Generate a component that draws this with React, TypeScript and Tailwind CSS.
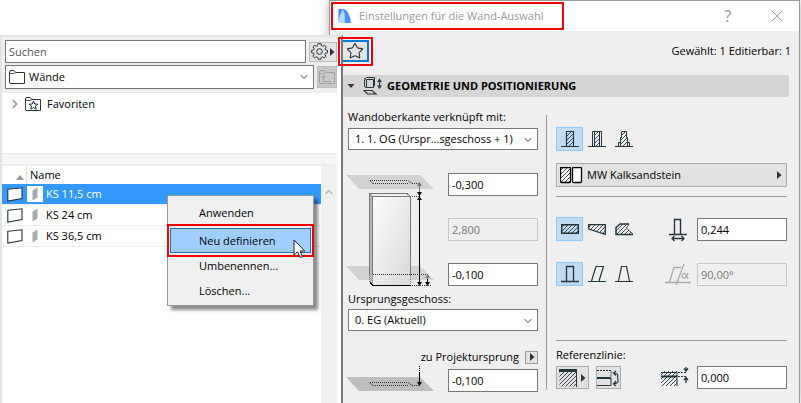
import React from 'react';
import clsx from 'clsx';
import { ChevronDown, ChevronRight, ChevronUp, Star, X } from 'lucide-react';

const INK = '#26343c';

const rows = ['KS 11,5 cm', 'KS 24 cm', 'KS 36,5 cm'];

const menuItems = ['Anwenden', 'Neu definieren', 'Umbenennen...', 'Löschen...'];

const Triangle: React.FC<{ dir: 'right' | 'down' | 'up' }> = ({ dir }) => (
  <svg width="8" height="8" viewBox="0 0 8 8" className="shrink-0" aria-hidden="true">
    {dir === 'right' && <path d="M2 0 L6.5 4 L2 8Z" fill="#333" />}
    {dir === 'down' && <path d="M0.5 2 H7.5 L4 6Z" fill="#333" />}
    {dir === 'up' && <path d="M0 6 H8 L4 1Z" fill="#999" />}
  </svg>
);

const FolderIcon: React.FC<{ kind?: 'plain' | 'star' | 'up' }> = ({ kind = 'plain' }) => (
  <svg
    width="17"
    height="15"
    viewBox="0 0 17 15"
    fill="none"
    stroke={kind === 'up' ? '#a0a0a0' : INK}
    className="shrink-0"
    aria-hidden="true"
  >
    <path d="M0.5 13 V2 Q0.5 0.5 2 0.5 H5 L7 2.5 H15.5 V13.5 H1Z" />
    <path d="M1 3.5 H5 L7 2.5" strokeWidth="0.8" />
    {kind === 'star' && (
      <path d="M8.5 4 L9.7 7 L12.8 7.2 L10.4 9.1 L11.2 12.2 L8.5 10.5 L5.8 12.2 L6.6 9.1 L4.2 7.2 L7.3 7Z" />
    )}
    {kind === 'up' && <path d="M4.5 12 V6 M2.5 8 L4.5 5.5 L6.5 8 M4.5 11.5 H12" />}
  </svg>
);

const GearIcon = () => (
  <svg width="17" height="17" viewBox="0 0 17 17" fill="none" stroke={INK} className="shrink-0" aria-hidden="true">
    <path
      strokeLinejoin="round"
      d="M7 0.7 H10 L10.4 2.8 L11.7 3.4 L13.5 2.1 L15.2 4 L14 5.8 L14.5 7 L16.5 7.4 V9.8 L14.4 10.2 L13.9 11.4 L15 13.2 L13.3 14.9 L11.5 13.8 L10.3 14.3 L9.9 16.3 H7.2 L6.7 14.3 L5.5 13.8 L3.7 14.9 L2 13.2 L3 11.4 L2.6 10.2 L0.6 9.8 V7.3 L2.6 6.9 L3.1 5.7 L2 3.9 L3.8 2.1 L5.4 3.3 L6.6 2.8Z"
    />
    <circle cx="8.5" cy="8.5" r="2.8" />
  </svg>
);

const WallRowIcons: React.FC<{ selected: boolean }> = ({ selected }) => (
  <>
    <svg width="17" height="15" viewBox="0 0 17 15" className="ml-1 mr-1 shrink-0" aria-hidden="true">
      <path d="M1.8 2.2 L16 0.8 V11.5 L1.8 14Z" fill="#fff" stroke={INK} strokeWidth="1.1" />
    </svg>
    <span className={clsx('mr-[3px] flex h-4 w-4 items-center justify-center', selected && 'bg-white')}>
      <svg width="6" height="14" viewBox="0 0 6 14" aria-hidden="true">
        <path d="M0.5 3.5 L5.5 0.5 V10.5 L0.5 13.5Z" fill="#aaa" />
      </svg>
    </span>
  </>
);

const GeometryIcon = () => (
  <svg width="20" height="18" viewBox="0 0 20 18" fill="none" stroke={INK} aria-hidden="true">
    <path d="M1.5 9.5 V2.5 L3.5 0.5 H11.5 V8 L10.5 10.5 H3 L1.5 9.5 M1.5 1 L3.5 3 V10 M3.5 2.5 H10.5 V10" />
    <path d="M1 13.5 H9 L13 17 H4.5Z" strokeWidth="1.2" />
    <path d="M16.5 3 V10" strokeWidth="1.2" />
    <path d="M14 5 L16.5 1.5 L19 5Z M14 8.5 L16.5 12 L19 8.5Z" fill={INK} stroke="none" />
  </svg>
);

const WallDiagram = () => (
  <svg width="88" height="120" viewBox="2 0 88 120" className="shrink-0 overflow-visible" aria-hidden="true">
    <defs>
      <linearGradient id="face" x1="0" y1="0" x2="1" y2="1">
        <stop offset="0" stopColor="#fcfcfc" />
        <stop offset="1" stopColor="#d9d9d9" />
      </linearGradient>
    </defs>
    <path d="M0 2 H74 L88 16 H13Z M0 93 H74 L88 107 H13Z" fill="#d2d2d2" />
    <path d="M23.5 21 L27 24 V112 L23.5 109Z" fill="#b8b8b8" />
    <rect x="27" y="24" width="37" height="88" fill="url(#face)" />
    <g fill="none" stroke="#777" shapeRendering="crispEdges">
      <path d="M23.5 102 V20.5 H61 L64.5 23.5 V102 M26.5 102 V23.5 H64.5 M23.5 20.5 L26.5 23.5" />
      <path d="M23.5 102 V109 L26.5 112.5 V102 M64.5 102 V112" strokeDasharray="1 1" />
      <path d="M73.5 10 V22 M81.5 102 V108" />
    </g>
    <g fill="none" stroke="#333" strokeDasharray="1 1" shapeRendering="crispEdges">
      <path d="M23.5 7.5 H62 M66 10.5 H73 M27 10.5 H62 M66 23.5 H73" />
      <path d="M27 101.5 H82 M66 112.5 H85" />
    </g>
    <path d="M23.5 7.5 L27 10.5 M62 7.5 L66 10.5" stroke="#555" strokeWidth="0.8" />
    <path d="M24 109.5 L27 112.5 H65 M73.5 19 V111 M81.5 106 V112" fill="none" stroke="#000" shapeRendering="crispEdges" />
    <path d="M71 13 L73.5 9 L76 13Z M79 105 L81.5 101.5 L84 105Z" fill="#777" />
    <path d="M71 19 H76 L73.5 23Z M71 27 H76 L73.5 23.5Z M71 109 H76 L73.5 113Z M79 109 H84 L81.5 113Z" fill="#000" />
  </svg>
);

const OriginDiagram = () => (
  <svg width="88" height="26" viewBox="2 0 88 26" className="shrink-0 overflow-visible" aria-hidden="true">
    <path d="M0 11 H74 L88 25 H13Z" fill="#bebebe" />
    <g fill="none" stroke="#333" strokeDasharray="1 1" shapeRendering="crispEdges">
      <path d="M23.5 16.5 H62 M66 19.5 H73 M27 19.5 H62" />
      <path d="M73.5 0 V7" stroke="#000" />
    </g>
    <path d="M23.5 16.5 L27 19.5 M62 16.5 L66 19.5" stroke="#444" strokeWidth="0.8" />
    <path d="M73.5 7 V18" stroke="#000" />
    <path d="M71 16 H76 L73.5 20Z" fill="#000" />
  </svg>
);

const HatchDefs = () => (
  <svg width="0" height="0" className="absolute" aria-hidden="true">
    <defs>
      <pattern id="hatch" width="4" height="4" patternUnits="userSpaceOnUse">
        <path d="M-1 1 L1 -1 M0 4 L4 0 M3 5 L5 3" stroke={INK} strokeWidth="0.9" />
      </pattern>
    </defs>
  </svg>
);

type Tool = { label: string; art: React.ReactNode };

const structures: Tool[] = [
  { label: 'Einfach', art: <path d="M0 16.5 H18 M5.5 16 V1.5 H12.5 V16" fill="url(#hatch)" strokeWidth="1.2" /> },
  {
    label: 'Mehrschichtig',
    art: (
      <>
        <path d="M0 16.5 H18 M4.5 16 V1.5 H13.5 V16" />
        <path d="M6.5 16 V1.5 H11.5 V16" fill="url(#hatch)" />
      </>
    ),
  },
  {
    label: 'Profil',
    art: (
      <>
        <path d="M0 16.5 H18 M3.5 16 V12.5 H5.5 V7.5 M14.5 16 V12.5 H12.5 V7.5" />
        <path d="M5.5 16 V7.5 H6.5 V1.5 H11.5 V7.5 H12.5 V16" fill="url(#hatch)" />
      </>
    ),
  },
];

const shapes: Tool[] = [
  { label: 'Gerade', art: <path d="M0.7 4.7 H17.3 V13.3 H0.7Z" strokeWidth="1.4" fill="url(#hatch)" /> },
  { label: 'Trapezförmig', art: <path d="M0.7 4.7 H17.3 V14.3 L0.7 9Z" strokeWidth="1.3" fill="url(#hatch)" /> },
  {
    label: 'Polygonal',
    art: (
      <>
        <path d="M1 14 V8 L5 4.5 H13 L11 8 L18 14Z" fill="url(#hatch)" strokeWidth="0" />
        <path d="M18 14.5 H1 V7.5 L5 4 H14" strokeWidth="1.5" />
        <path d="M14 4 L11.5 8 L18.5 14.5" strokeWidth="0.8" />
      </>
    ),
  },
];

const complexities: Tool[] = [
  { label: 'Senkrecht', art: <path d="M0 16.5 H18 M5.5 16 V1.5 H12.5 V16" strokeWidth="1.3" /> },
  { label: 'Geneigt', art: <path d="M0 16.5 H18 M3.5 16 L8 1.5 H15.5 L11 16" strokeWidth="1.2" /> },
  { label: 'Doppelt geneigt', art: <path d="M0 16.5 H18 M3.5 16 L6.5 1.5 H11.5 L14.5 16" strokeWidth="1.2" /> },
];

const ToolGroup: React.FC<{ tools: Tool[] }> = ({ tools }) => (
  <div className="flex">
    {tools.map((tool, idx) => (
      <button
        key={tool.label}
        type="button"
        aria-label={tool.label}
        aria-pressed={idx === 0}
        className={clsx(
          'flex h-6 w-[27px] items-center justify-center border',
          idx === 0 ? 'border-[#90c8f6] bg-[#bfdcf3]' : 'border-transparent',
        )}
      >
        <svg width="18" height="18" viewBox="0 0 18 18" fill="none" stroke={INK} className="shrink-0">
          {tool.art}
        </svg>
      </button>
    ))}
  </div>
);

const NumberField: React.FC<{ label: string; value: string; disabled?: boolean }> = ({ label, value, disabled }) => (
  <input
    aria-label={label}
    defaultValue={value}
    disabled={disabled}
    className={clsx(
      'h-[23px] w-[90px] border px-[3px]',
      disabled ? 'border-[#c8c8c8] bg-[#efefef] text-[#777]' : 'border-[#777] bg-white text-black',
    )}
  />
);

const SelectBox: React.FC<{ id: string; value: string }> = ({ id, value }) => (
  <div className="relative">
    <select id={id} className="h-[22px] w-full appearance-none border border-[#777] bg-white pl-1.5 pr-5">
      <option>{value}</option>
    </select>
    <ChevronDown size={12} strokeWidth={2} className="pointer-events-none absolute right-1 top-[6px] text-[#444]" />
  </div>
);

const Highlight: React.FC<{ className: string }> = ({ className }) => (
  <span className={clsx('pointer-events-none absolute border-2 border-[#f00000]', className)} />
);

const ContextMenu = () => (
  <div
    role="menu"
    className="flex w-[147px] flex-col border border-[#999] bg-[#f0f0f0] pb-0.5 pt-1 shadow-[4px_4px_3px_rgba(0,0,0,0.45)]"
  >
    {menuItems.map((item, idx) => (
      <button
        key={item}
        type="button"
        role="menuitem"
        className={clsx(
          'relative mx-0.5 h-[25px] border pl-[28px] text-left',
          idx === 1 ? 'mt-[3px] border-[#2a6fb8] bg-[#a0cfff]' : 'border-transparent',
        )}
      >
        {item}
        {idx === 1 && <Highlight className="-inset-x-1 -bottom-[5px] -top-[5px]" />}
        {idx === 1 && (
          <svg width="13" height="20" viewBox="0 0 13 20" className="absolute -bottom-[7px] right-1 z-10" aria-hidden="true">
            <path d="M1 1 V16 L4.5 12.8 L7 18.5 L9.5 17.5 L7 12 H11.8Z" fill="#fff" stroke="#222" />
          </svg>
        )}
      </button>
    ))}
  </div>
);

const FavoritesPanel = () => (
  <section className="absolute bottom-0 left-0 top-[35px] z-10 flex w-[343px] flex-col border-l-2 border-r-2 border-t-2 border-[#e4e4e4] border-r-[#777] bg-white">
    <div className="mr-1 flex flex-col gap-0.5 bg-[#efefef] pb-1 pl-[3px] pt-[3px]">
      <div className="flex items-center gap-[3px]">
        <input
          aria-label="Suchen"
          placeholder="Suchen"
          className="h-[23px] min-w-0 flex-1 border border-[#777] bg-white px-[3px] placeholder:text-[#555]"
        />
        <button type="button" aria-label="Einstellungen" className="flex h-5 w-7 items-center justify-center border border-[#bbb] bg-[#e2e2e2]">
          <GearIcon />
          <Triangle dir="right" />
        </button>
      </div>
      <div className="flex items-center gap-[3px]">
        <button type="button" className="flex h-6 flex-1 items-center gap-[3px] border border-[#777] bg-white pl-[3px] pr-[3px]">
          <FolderIcon />
          <span className="flex-1 text-left">Wände</span>
          <ChevronDown size={12} className="text-[#444]" />
        </button>
        <button type="button" aria-label="Ebene nach oben" disabled className="flex h-[22px] w-5 items-center justify-center border border-[#bcbcbc] bg-[#c8c8c8]">
          <FolderIcon kind="up" />
        </button>
      </div>
    </div>

    <div className="h-[60px] shrink-0 px-1.5 pt-0.5">
      <div className="flex items-center">
        <ChevronRight size={14} strokeWidth={3} className="mr-[3px] text-[#999]" />
        <FolderIcon kind="star" />
        <span className="ml-[5px]">Favoriten</span>
      </div>
    </div>
    <div className="mr-1 h-[13px] shrink-0 border-y-2 border-[#ededed] bg-[#f6f6f6]" />

    <div className="flex flex-1">
      <table className="block flex-1 self-start">
        <thead className="block">
          <tr className="flex h-[18px] items-center">
            <th aria-label="Sortierung" className="flex h-full w-[25px] items-end justify-end border-r border-[#e2e2e2] pb-0.5 pr-0.5">
              <Triangle dir="up" />
            </th>
            <th className="pl-[3px] font-normal">Name</th>
          </tr>
        </thead>
        <tbody className="block">
          {rows.map((row, idx) => (
            <tr key={row} className={clsx('block border-b border-[#ececec]', idx === 0 && 'bg-[#3399ff] text-white')}>
              <td className="flex h-5 items-center">
                <WallRowIcons selected={idx === 0} />
                {row}
              </td>
            </tr>
          ))}
        </tbody>
      </table>
      <div className="mr-1 flex w-4 justify-center bg-[#f0f0f0] pt-5">
        <ChevronUp size={12} strokeWidth={3} className="text-[#bbb]" />
      </div>
    </div>
    <div className="absolute left-[165px] top-[158px] z-20">
      <ContextMenu />
    </div>
  </section>
);

const TitleBar = () => (
  <header className="relative flex h-[30px] items-center bg-white pl-2 pr-[13px] text-[#999]">
    <svg width="15" height="16" viewBox="0 0 15 16" className="mr-1.5 shrink-0" aria-hidden="true">
      <path d="M0.5 1 H5 Q3 5 0.5 14Z" fill="#3d86f5" />
      <path d="M0.5 15 Q1 5 6 0.5 V15Z" fill="#b4d6ff" />
      <path d="M5 0.5 Q12 3 13 15 H6.5 V6Z" fill="#4b90f8" />
    </svg>
    <h1 className="flex-1">Einstellungen für die Wand-Auswahl</h1>
    <button type="button" className="mr-8 w-4 text-base">?</button>
    <button type="button" aria-label="Schließen"><X size={18} strokeWidth={1.3} /></button>
    <Highlight className="left-px top-px h-[28px] w-[233px]" />
  </header>
);

const StoreyColumn = () => (
  <div className="w-[190px] shrink-0">
    <label htmlFor="top-link" className="mb-px block h-5 leading-5">Wandoberkante verknüpft mit:</label>
    <SelectBox id="top-link" value="1. 1. OG (Urspr...sgeschoss + 1)" />
    <div className="mt-[23px] flex justify-between">
      <WallDiagram />
      <div className="flex flex-col gap-[22px]">
        <NumberField label="Abstand oben" value="-0,300" />
        <NumberField label="Höhe" value="2,800" disabled />
        <NumberField label="Abstand unten" value="-0,100" />
      </div>
    </div>
    <label htmlFor="home" className="-mt-1 block h-5 leading-5">Ursprungsgeschoss:</label>
    <SelectBox id="home" value="0. EG (Aktuell)" />
    <div className="mt-4 flex h-5 items-center justify-end gap-1.5">
      <span>zu Projektursprung</span>
      <button type="button" aria-label="Bezug wählen" className="flex h-[13px] w-[13px] items-center justify-center border border-[#999] bg-[#e2e2e2]">
        <Triangle dir="right" />
      </button>
    </div>
    <div className="-mt-px flex items-end justify-between">
      <OriginDiagram />
      <NumberField label="Höhe zum Projektursprung" value="-0,100" />
    </div>
  </div>
);

const StructureColumn = () => (
  <div className="flex-1 pt-5">
    <ToolGroup tools={structures} />
    <button type="button" className="mt-3 flex h-6 w-full items-center gap-1 border border-[#aaa] bg-[#e1e1e1] px-[3px]">
      <svg width="23" height="17" viewBox="0 0 23 17" fill="none" stroke="#000" aria-hidden="true">
        <rect x="0.5" y="0.5" width="10" height="15" rx="1" fill="#fff" />
        <rect x="0.5" y="0.5" width="10" height="15" rx="1" fill="url(#hatch)" strokeWidth="1.3" />
        <rect x="12.5" y="0.5" width="9" height="15" rx="1" fill="#fff" strokeWidth="1.3" />
      </svg>
      <span className="flex-1 text-left">MW Kalksandstein</span>
      <Triangle dir="right" />
    </button>
    <hr className="mb-5 mt-[9px] border-[#999]" />
    <div className="flex flex-col gap-[21px]">
      <div className="flex items-center">
        <ToolGroup tools={shapes} />
        <svg width="18" height="24" viewBox="0 0 18 24" fill="none" stroke={INK} className="ml-auto mr-2.5 overflow-visible" aria-hidden="true">
          <path d="M0 17.5 H18 M5.5 17 V2.5 H11.5 V17" strokeWidth="1.4" />
          <path d="M3 21.5 H15 M5.5 19 L3 21.5 L5.5 24 M12.5 19 L15 21.5 L12.5 24" strokeWidth="1.3" />
        </svg>
        <NumberField label="Wanddicke" value="0,244" />
      </div>
      <div className="flex items-center">
        <ToolGroup tools={complexities} />
        <svg width="26" height="22" viewBox="0 0 26 22" fill="none" stroke="#aaa" className="ml-auto mr-1.5" aria-hidden="true">
          <path d="M0 19.5 H26 M4.5 19 L9 4.5 H16 M11 22 L19 1" strokeWidth="1.3" />
          <path d="M23 10 Q21 16 18.5 15 Q16.5 14 17.5 11.5 Q19.5 9 21 12 Q22 15.5 23.5 15" strokeWidth="1.2" />
        </svg>
        <NumberField label="Neigungswinkel" value="90,00°" disabled />
      </div>
    </div>
    <hr className="mb-1 mt-[54px] border-[#999]" />
    <p className="h-5 leading-5">Referenzlinie:</p>
    <div className="mt-px flex items-center">
      <button type="button" aria-label="Referenzlinie" className="flex h-[23px] w-[33px] items-center justify-center gap-0.5 border border-[#aaa] bg-[#e1e1e1]">
        <svg width="18" height="18" viewBox="0 0 18 18" fill="none" stroke={INK} className="shrink-0" aria-hidden="true">
          <rect x="0.5" y="3" width="17" height="14.5" fill="url(#hatch)" stroke="none" />
          <path d="M17.5 2 V18" strokeWidth="1" />
          <path d="M0 1.5 H18" strokeWidth="3" />
        </svg>
        <Triangle dir="right" />
      </button>
      <button type="button" aria-label="Referenzlinie umkehren" className="ml-[7px] flex h-[23px] w-[25px] items-center justify-center border border-[#aaa] bg-[#e1e1e1]">
        <svg width="23" height="18" viewBox="0 0 23 18" fill="none" stroke={INK} className="shrink-0" aria-hidden="true">
          <path d="M0 1.5 H14 V8" strokeDasharray="2 1" />
          <path d="M0 16.5 H14 V9" />
          <path d="M0 9 H14" strokeWidth="2" />
          <path d="M17 4 Q22 4 20.5 9 M19 2 L16.5 4 L19 6.5 M17 15 Q23 14 20.5 9 M19 12 L16.5 15 L19 17" strokeWidth="1.2" />
        </svg>
      </button>
      <svg width="28" height="22" viewBox="0 0 28 22" fill="none" stroke={INK} className="ml-auto mr-2" aria-hidden="true">
        <rect x="0" y="4" width="16" height="15" fill="url(#hatch)" stroke="none" />
        <path d="M0 5.5 H16 V19" />
        <path d="M0 9.5 H16" strokeWidth="2" />
        <path d="M17 5.5 H26 M17 9.5 H26" strokeDasharray="2 1" />
        <path d="M25 -2 V3 M23 1.5 L25 4 L27 1.5 M25 16 V11 M23 13 L25 10.5 L27 13" strokeWidth="1.3" />
      </svg>
      <NumberField label="Versatz der Referenzlinie" value="0,000" />
    </div>
  </div>
);

export default function App() {
  return (
    <main className="relative min-h-screen overflow-hidden bg-white font-['Open_Sans','Noto_Sans',sans-serif] text-[11px] leading-[18px] text-black">
      <HatchDefs />
      <div className="ml-[329px] mr-px flex min-h-screen flex-col border-x border-t border-[#999] bg-[#efefef] shadow-[0_0_10px_rgba(0,0,0,0.3)]">
        <TitleBar />
        <div className="relative z-20 flex h-11 items-start justify-between pl-[13px] pr-2 pt-[9px]">
          <button type="button" aria-label="Favoriten" className="flex h-[22px] w-[26px] items-center justify-center border-y-2 border-r-2 border-[#0078d7] bg-[#e5e5e5]">
            <Star size={18} strokeWidth={1.5} color={INK} />
          </button>
          <Highlight className="left-2 top-1.5 h-[29px] w-[35px]" />
          <span className="leading-[22px]">Gewählt: 1 Editierbar: 1</span>
        </div>
        <section>
          <h2 className="ml-[13px] mr-2.5 flex h-[22px] items-center rounded-r-xs bg-[#d5d5d5] pl-1 font-bold">
            <Triangle dir="down" />
            <span className="ml-2 mr-1"><GeometryIcon /></span>
            GEOMETRIE UND POSITIONIERUNG
          </h2>
          <div className="flex gap-2 pl-[18px] pr-3 pt-2.5">
            <StoreyColumn />
            <div className="mb-0.5 mr-px mt-2 w-px bg-[#999]" />
            <StructureColumn />
          </div>
        </section>
      </div>
      <FavoritesPanel />
    </main>
  );
}
